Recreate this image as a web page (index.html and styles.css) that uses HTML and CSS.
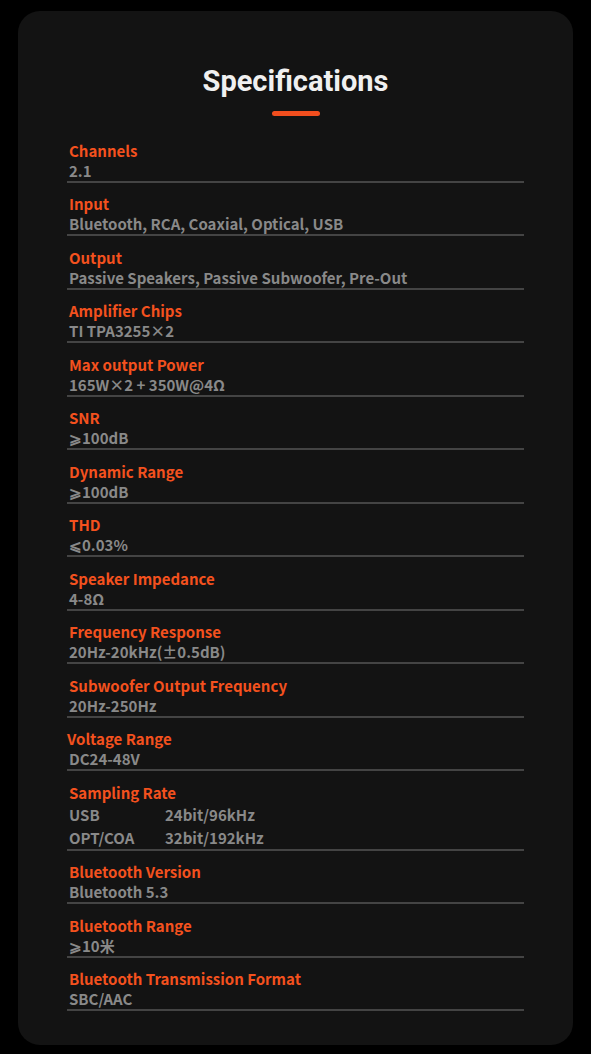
FILE: index.html
```html
<!DOCTYPE html>
<html>
<head>
    <title>Specifications</title>
    <link rel="stylesheet" href="styles.css">
</head>
<body>
    <div class="spec-card">
        <h1 class="spec-title">Specifications</h1>
        <div class="title-bar"></div>

        <div class="spec-list">
            <div class="spec-row">
                <div class="spec-label">Channels</div>
                <div class="spec-value">2.1</div>
            </div>
            <div class="spec-row">
                <div class="spec-label">Input</div>
                <div class="spec-value">Bluetooth, RCA, Coaxial, Optical, USB</div>
            </div>
            <div class="spec-row">
                <div class="spec-label">Output</div>
                <div class="spec-value">Passive Speakers, Passive Subwoofer, Pre-Out</div>
            </div>
            <div class="spec-row">
                <div class="spec-label">Amplifier Chips</div>
                <div class="spec-value">TI TPA3255×2</div>
            </div>
            <div class="spec-row">
                <div class="spec-label">Max output Power</div>
                <div class="spec-value">165W×2 + 350W@4Ω</div>
            </div>
            <div class="spec-row">
                <div class="spec-label">SNR</div>
                <div class="spec-value">⩾100dB</div>
            </div>
            <div class="spec-row">
                <div class="spec-label">Dynamic Range</div>
                <div class="spec-value">⩾100dB</div>
            </div>
            <div class="spec-row">
                <div class="spec-label">THD</div>
                <div class="spec-value">⩽0.03%</div>
            </div>
            <div class="spec-row">
                <div class="spec-label">Speaker Impedance</div>
                <div class="spec-value">4-8Ω</div>
            </div>
            <div class="spec-row">
                <div class="spec-label">Frequency Response</div>
                <div class="spec-value">20Hz-20kHz(±0.5dB)</div>
            </div>
            <div class="spec-row">
                <div class="spec-label">Subwoofer Output Frequency</div>
                <div class="spec-value">20Hz-250Hz</div>
            </div>
            <div class="spec-row">
                <div class="spec-label shifted">Voltage Range</div>
                <div class="spec-value">DC24-48V</div>
            </div>
            <div class="spec-row">
                <div class="spec-label">Sampling Rate</div>
                <div class="spec-table">
                    <span>USB</span><span>24bit/96kHz</span>
                    <span>OPT/COA</span><span>32bit/192kHz</span>
                </div>
            </div>
            <div class="spec-row">
                <div class="spec-label">Bluetooth Version</div>
                <div class="spec-value">Bluetooth 5.3</div>
            </div>
            <div class="spec-row">
                <div class="spec-label">Bluetooth Range</div>
                <div class="spec-value">⩾10米</div>
            </div>
            <div class="spec-row">
                <div class="spec-label">Bluetooth Transmission Format</div>
                <div class="spec-value">SBC/AAC</div>
            </div>
        </div>
    </div>
</body>
</html>
```

FILE: styles.css
```css
body {
    margin: 0;
    background-color: #000;
    font-family: "Noto Sans CJK SC", "Noto Sans", sans-serif;
}

.spec-card {
    margin: 11px 18px 9px 18px;
    padding: 50px 49px 34px 49px;
    background-color: #131313;
    border-radius: 22px;
}

.spec-title {
    margin: 0;
    font-family: Roboto, "Liberation Sans", sans-serif;
    font-size: 29px;
    font-weight: 700;
    line-height: 40px;
    text-align: center;
    color: #f0f0f0;
}

.title-bar {
    width: 48px;
    height: 5px;
    margin: 10px auto 0 auto;
    border-radius: 3px;
    background-color: #f24e1e;
}

.spec-list {
    margin-top: 13px;
}

.spec-row {
    padding-top: 11.5px;
    border-bottom: 2px solid #444;
}

.spec-label {
    padding-left: 2px;
    font-size: 15px;
    font-weight: 700;
    line-height: 20px;
    color: #f4511e;
}

.spec-label.shifted {
    padding-left: 0;
}

.spec-value {
    padding-left: 2px;
    font-size: 15px;
    font-weight: 700;
    line-height: 20px;
    color: #898989;
}

.spec-table {
    display: grid;
    grid-template-columns: 96px auto;
    padding-left: 2px;
    font-size: 15px;
    font-weight: 700;
    line-height: 23px;
    color: #898989;
}
```
